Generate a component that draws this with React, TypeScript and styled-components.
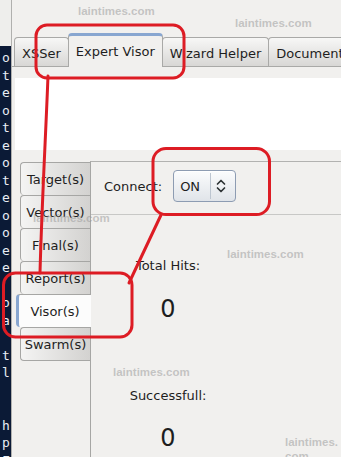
import React from "react";
import styled, { createGlobalStyle } from "styled-components";

const GlobalStyle = createGlobalStyle`
  html, body { margin: 0; padding: 0; background: #f1f0ee; }
  body { font-family: "DejaVu Sans", "Liberation Sans", sans-serif; }
  * { box-sizing: border-box; }
`;

const Screen = styled.div`
  position: relative;
  width: 341px;
  height: 457px;
  overflow: hidden;
  display: flex;
  font-family: "DejaVu Sans", "Liberation Sans", sans-serif;
  font-size: 13px;
  color: #1e1e1e;
`;

const Terminal = styled.div`
  width: 11px;
  flex: none;
  display: flex;
  flex-direction: column;
  overflow: hidden;
`;

const TerminalTop = styled.div`
  height: 46px;
  flex: none;
  background: #eeeeec;
`;

const TerminalBody = styled.div`
  flex: 1;
  background: #0b1a36;
  color: #e8edf5;
  font-family: "DejaVu Sans Mono", "Liberation Mono", monospace;
  font-size: 13px;
  line-height: 17.5px;
  padding: 3px 0 0 2px;
  white-space: pre;
  overflow: hidden;
`;

const TermLine = styled.div`
  height: 17.5px;
`;

const Window = styled.div`
  flex: 1;
  min-width: 0;
  display: flex;
  flex-direction: column;
  background: #f1f0ee;
  border-left: 1px solid #b0b0ae;
`;

const TitleArea = styled.div`
  height: 33px;
  flex: none;
`;

const TabBar = styled.div`
  position: relative;
  height: 34px;
  flex: none;
  display: flex;
  align-items: flex-end;
  padding-left: 2px;
  overflow: hidden;
  &::after {
    content: "";
    position: absolute;
    left: 0;
    right: 0;
    bottom: 0;
    height: 1px;
    background: #a9a9a7;
  }
`;

const Tab = styled.div<{ $active?: boolean }>`
  position: relative;
  z-index: ${(p) => (p.$active ? 1 : 0)};
  flex: none;
  display: flex;
  align-items: center;
  justify-content: center;
  white-space: nowrap;
  padding: ${(p) => (p.$active ? "0 7px" : "2px 7px 0")};
  height: ${(p) => (p.$active ? 34 : 29)}px;
  margin-bottom: ${(p) => (p.$active ? 0 : 1)}px;
  margin-left: -1px;
  &:first-child { margin-left: 0; }
  border: 1px solid #a9a9a7;
  border-bottom: none;
  border-top: ${(p) => (p.$active ? "3px solid #88a6d0" : "1px solid #a9a9a7")};
  border-radius: 4px 4px 0 0;
  background: ${(p) => (p.$active ? "#f1f0ee" : "linear-gradient(#f7f7f6, #d8d7d5)")};
`;

const Page = styled.div`
  flex: 1;
  min-height: 0;
  display: flex;
  flex-direction: column;
  gap: 11px;
  padding: 11px 0 0 3px;
`;

const TextArea = styled.div`
  height: 72px;
  flex: none;
  background: #ffffff;
`;

const LowerNotebook = styled.div`
  flex: 1;
  display: flex;
  padding-left: 1px;
`;

const TabColumn = styled.div`
  width: 74px;
  flex: none;
  display: flex;
  flex-direction: column;
  align-items: flex-end;
  padding-top: 1px;
`;

const VTab = styled.div<{ $active?: boolean; $last?: boolean }>`
  position: relative;
  z-index: ${(p) => (p.$active ? 1 : 0)};
  height: ${(p) => (p.$last ? 34 : 33)}px;
  width: ${(p) => (p.$active ? 75 : 70)}px;
  margin-right: ${(p) => (p.$active ? -1 : 0)}px;
  display: flex;
  align-items: center;
  justify-content: center;
  white-space: nowrap;
  border: 1px solid #a6a6a4;
  border-right: none;
  border-bottom: ${(p) => (p.$last ? "1px solid #a6a6a4" : "none")};
  border-left: ${(p) => (p.$active ? "3px solid #88a6d0" : "1px solid #a6a6a4")};
  border-radius: 4px 0 0 4px;
  background: ${(p) => (p.$active ? "#fcfcfc" : "linear-gradient(to right, #f4f4f3, #d3d2d0)")};
`;

const Panel = styled.div`
  flex: 1;
  min-width: 0;
  display: flex;
  flex-direction: column;
  border-left: 1px solid #a6a6a4;
  border-top: 1px solid #b2b2b0;
`;

const ConnectRow = styled.div`
  height: 53px;
  flex: none;
  display: flex;
  align-items: center;
  gap: 11px;
  padding: 8px 0 12px 13px;
  border-bottom: 1px solid #c8c8c6;
`;

const Combo = styled.div`
  width: 63px;
  height: 32px;
  display: flex;
  align-items: center;
  border: 1px solid #8d9cb2;
  border-radius: 4px;
  background: linear-gradient(#fbfcfd, #e0e4e9);
  box-shadow: inset 0 1px 0 #ffffff;
`;

const ComboText = styled.span`
  width: 36px;
  padding-left: 6px;
`;

const ComboDivider = styled.span`
  width: 1px;
  height: 26px;
  background: #bcc5d0;
`;

const ComboArrow = styled.span`
  flex: 1;
  display: flex;
  justify-content: center;
  padding-right: 4px;
`;

const Stats = styled.div`
  width: 154px;
  display: flex;
  flex-direction: column;
  align-items: center;
`;

const StatLabel = styled.div<{ $gap: number }>`
  margin-top: ${(p) => p.$gap}px;
  line-height: 16px;
`;

const StatValue = styled.div<{ $gap: number }>`
  margin-top: ${(p) => p.$gap}px;
  font-size: 24px;
  line-height: 28px;
`;

const Watermark = styled.div<{ $left: number; $top: number }>`
  position: absolute;
  left: ${(p) => p.$left}px;
  top: ${(p) => p.$top}px;
  z-index: 5;
  font-family: "Liberation Sans", Arial, sans-serif;
  font-weight: bold;
  font-size: 11.5px;
  line-height: 14px;
  color: rgba(150, 150, 150, 0.5);
  white-space: pre;
  pointer-events: none;
`;

const Annotations = styled.svg`
  position: absolute;
  left: 0;
  top: 0;
  z-index: 10;
  pointer-events: none;
`;

const termLines = [
  "o", "t", "e", "o", "t", "e", "o", "t", "e", "o",
  "o'", "e", "e", "", "o", "a", "", "t", "l", "", "", "h", "p", "F",
];

const topTabs = ["XSSer", "Expert Visor", "Wizard Helper", "Documentation"];
const sideTabs = ["Target(s)", "Vector(s)", "Final(s)", "Report(s)", "Visor(s)", "Swarm(s)"];

const watermarks: { left: number; top: number; text: string }[] = [
  { left: 78, top: 4, text: "laintimes.com" },
  { left: 235, top: 16, text: "laintimes.com" },
  { left: 33, top: 211, text: "laintimes.com" },
  { left: 227, top: 247, text: "laintimes.com" },
  { left: 113, top: 365, text: "laintimes.com" },
  { left: 285, top: 435, text: "laintimes.\ncom" },
];

function Chevrons() {
  return (
    <svg width="10" height="16" viewBox="0 0 10 16" fill="none">
      <path d="M1.5 6 L5 2.5 L8.5 6" stroke="#2e3436" strokeWidth="1.7" strokeLinecap="round" strokeLinejoin="round" />
      <path d="M1.5 10 L5 13.5 L8.5 10" stroke="#2e3436" strokeWidth="1.7" strokeLinecap="round" strokeLinejoin="round" />
    </svg>
  );
}

export default function App() {
  return (
    <>
      <GlobalStyle />
      <Screen>
        <Terminal>
          <TerminalTop />
          <TerminalBody>
            {termLines.map((l, i) => (
              <TermLine key={i}>{l}</TermLine>
            ))}
          </TerminalBody>
        </Terminal>
        <Window>
          <TitleArea />
          <TabBar>
            {topTabs.map((t) => (
              <Tab key={t} $active={t === "Expert Visor"}>
                {t}
              </Tab>
            ))}
          </TabBar>
          <Page>
            <TextArea />
            <LowerNotebook>
              <TabColumn>
                {sideTabs.map((t, i) => (
                  <VTab key={t} $active={t === "Visor(s)"} $last={i === sideTabs.length - 1}>
                    {t}
                  </VTab>
                ))}
              </TabColumn>
              <Panel>
                <ConnectRow>
                  <span>Connect:</span>
                  <Combo>
                    <ComboText>ON</ComboText>
                    <ComboDivider />
                    <ComboArrow>
                      <Chevrons />
                    </ComboArrow>
                  </Combo>
                </ConnectRow>
                <Stats>
                  <StatLabel $gap={43}>Total Hits:</StatLabel>
                  <StatValue $gap={21}>0</StatValue>
                  <StatLabel $gap={65}>Successfull:</StatLabel>
                  <StatValue $gap={20}>0</StatValue>
                </Stats>
              </Panel>
            </LowerNotebook>
          </Page>
        </Window>

        {watermarks.map((w, i) => (
          <Watermark key={i} $left={w.left} $top={w.top}>
            {w.text}
          </Watermark>
        ))}

        <Annotations width="341" height="457" viewBox="0 0 341 457" fill="none">
          <g stroke="#dd1c24" strokeWidth="3" strokeLinecap="round" strokeLinejoin="round">
            <rect x="36" y="25" width="148" height="53" rx="11" />
            <path d="M48 76 C46 130 42 200 40 273" />
            <rect x="3.5" y="273" width="128.5" height="64" rx="12" />
            <rect x="153" y="148.5" width="116.5" height="66" rx="13" />
            <path d="M161 215 L129 283" />
          </g>
        </Annotations>
      </Screen>
    </>
  );
}
